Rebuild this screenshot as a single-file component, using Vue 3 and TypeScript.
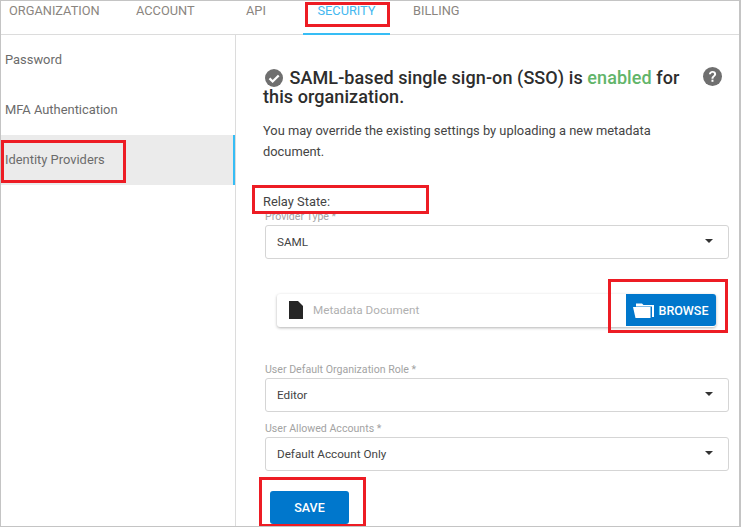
<script setup lang="ts">
const tabs = [
  { label: 'ORGANIZATION', cls: 't1' },
  { label: 'ACCOUNT', cls: 't2' },
  { label: 'API', cls: 't3' },
  { label: 'SECURITY', cls: 't4 active' },
  { label: 'BILLING', cls: 't5' },
]
const nav = ['Password', 'MFA Authentication', 'Identity Providers']
const marks = ['m1', 'm2', 'm3', 'm4', 'm5']
</script>

<template>
  <div class="page">
    <header class="tabs">
      <span v-for="t in tabs" :key="t.label" class="tab" :class="t.cls">{{ t.label }}</span>
    </header>
    <div class="body">
      <aside class="side">
        <div v-for="(n, i) in nav" :key="n" class="nav" :class="{ on: i === 2 }">{{ n }}</div>
      </aside>
      <main class="main">
        <div class="head">
          <h1 class="title">
            <svg class="ico" viewBox="0 0 24 24"><circle cx="12" cy="12" r="12" fill="#6f6f6f"/><path d="M6 12.5l4.2 4.2L18.3 8.6" fill="none" stroke="#fff" stroke-width="3"/></svg>
            SAML-based single sign-on (SSO) is <b>enabled</b> for this organization.
          </h1>
          <svg class="help" viewBox="0 0 24 24"><circle cx="12" cy="12" r="12" fill="#6f6f6f"/><path d="M7.500 9.300c0-2.700 2-4.300 4.600-4.300 2.600 0 4.500 1.600 4.500 3.800 0 3.200-3.400 3.300-3.400 6h-2.500c0-3.800 3.300-3.900 3.300-5.800 0-1-.8-1.700-1.900-1.700-1.200 0-2.100.9-2.100 2z" fill="#fff"/><rect x="10.700" y="16" width="2.500" height="2.700" fill="#fff"/></svg>
        </div>
        <p class="desc">You may override the existing settings by uploading a new metadata document.</p>
        <div class="relay">Relay State:</div>
        <label class="lbl first">Provider Type *</label>
        <div class="select"><span>SAML</span><i class="caret"></i></div>
        <div class="upload">
          <svg class="doc" viewBox="0 0 14 18"><path d="M0 0h9l5 5v13H0z" fill="#262626"/></svg>
          <span class="ph">Metadata Document</span>
          <button class="browse" type="button">
            <svg class="folder" viewBox="0 0 22 16"><path d="M3 3V1.500h6L10.500 3H21v12h-2V4.500H3z" fill="#fff"/><path d="M0 5h17.500v11H2.500z" fill="#fff"/></svg>
            BROWSE
          </button>
        </div>
        <label class="lbl second">User Default Organization Role *</label>
        <div class="select"><span>Editor</span><i class="caret"></i></div>
        <label class="lbl third">User Allowed Accounts *</label>
        <div class="select"><span>Default Account Only</span><i class="caret"></i></div>
        <button class="save" type="button">SAVE</button>
      </main>
    </div>
    <i v-for="m in marks" :key="m" class="mark" :class="m"></i>
  </div>
</template>

<style>
html, body { margin: 0; background: #fff; }
</style>

<style scoped>
.page {
  position: relative;
  width: 741px;
  height: 527px;
  box-sizing: border-box;
  border-top: 1px solid #c4c4c4;
  border-left: 1px solid #c4c4c4;
  border-right: 2px solid #c4c4c4;
  border-bottom: 1px solid #c4c4c4;
  overflow: hidden;
  font-family: Roboto, "Liberation Sans", sans-serif;
  color: #444;
  background: #fff;
}
.tabs {
  display: flex;
  height: 34px;
  box-sizing: border-box;
  border-bottom: 1px solid #dcdcdc;
}
.tab {
  box-sizing: border-box;
  height: 34px;
  padding-top: 3px;
  font-size: 12.800px;
  line-height: 14px;
  color: #8a8580;
  text-align: center;
}
.t1 { width: 118px; padding-left: 8px; text-align: left; }
.t2 { width: 102px; padding-left: 17px; text-align: left; }
.t3 { width: 82px; padding-left: 25px; text-align: left; }
.t4 { width: 87px; }
.t5 { width: 90px; padding-left: 23px; text-align: left; }
.active { color: #45b8f0; border-bottom: 2px solid #36bdf5; }
.body { display: flex; height: 491px; }
.side {
  box-sizing: border-box;
  width: 235px;
  border-right: 1px solid #dcdcdc;
}
.nav {
  box-sizing: border-box;
  height: 50px;
  padding: 17px 0 0 4px;
  font-size: 12.900px;
  line-height: 16px;
  color: #6b6b6b;
}
.on { background: #ebebeb; border-right: 2px solid #36bdf5; }
.main { flex: 1; min-width: 0; padding: 0 0 0 27px; }
.head { display: flex; padding-top: 33px; }
.title {
  width: 425px;
  margin: 0;
  font-size: 18px;
  line-height: 19px;
  font-weight: 500;
  letter-spacing: .08px;
  color: #2d2d2d;
}
.title b { font-weight: 500; color: #62b56a; }
.ico { width: 18px; height: 18px; margin: 0 2px 0 2px; vertical-align: -3px; }
.help { width: 19px; height: 19px; margin: -1px 0 0 15px; }
.desc {
  width: 420px;
  margin: 14px 0 0;
  font-size: 12.870px;
  line-height: 21px;
  color: #444;
}
.relay { margin-top: 32px; font-size: 12.870px; line-height: 16px; color: #444; }
.lbl { display: block; margin: 0 0 -2px 2px; font-size: 10.600px; line-height: 16px; color: #a3a3a3; }
.first { margin-top: -1px; }
.second { margin-top: 35px; }
.third { margin-top: 9px; }
.select {
  display: flex;
  align-items: center;
  justify-content: space-between;
  box-sizing: border-box;
  width: 464px;
  height: 34px;
  margin: 2px 0 0 2px;
  padding: 0 15px 0 11px;
  border: 1px solid #d5d5d5;
  border-radius: 3px;
  font-size: 11.700px;
  color: #444;
}
.caret {
  width: 0;
  height: 0;
  margin-bottom: 3px;
  border-left: 4px solid transparent;
  border-right: 4px solid transparent;
  border-top: 4px solid #333;
}
.upload {
  display: flex;
  align-items: center;
  box-sizing: border-box;
  width: 439px;
  height: 33px;
  margin: 35px 0 0 14px;
  padding: 0 0 2px 12px;
  border-radius: 3px;
  background: #fff;
  box-shadow: 0 1px 3px rgba(0, 0, 0, .3);
}
.doc { width: 14px; height: 18px; }
.ph { flex: 1; margin-left: 10px; font-size: 11.700px; color: #b0b0b0; }
.browse {
  display: flex;
  align-items: center;
  justify-content: center;
  align-self: flex-start;
  gap: 3px;
  width: 90px;
  height: 32px;
  padding: 0;
  border: 0;
  border-radius: 0 3px 3px 0;
  background: #0077cc;
  color: #fff;
  font: 500 12.500px Roboto, sans-serif;
}
.folder { width: 22px; height: 16px; }
.save {
  display: block;
  width: 79px;
  height: 33px;
  margin: 20px 0 0 7px;
  padding: 0;
  border: 0;
  border-radius: 3px;
  background: #0077cc;
  color: #fff;
  font: 500 12.500px Roboto, sans-serif;
}
.mark { position: absolute; box-sizing: border-box; border: 3px solid #ed1c24; pointer-events: none; }
.m1 { left: 304px; top: 1px; width: 85px; height: 25px; }
.m2 { left: 0; top: 139px; width: 125px; height: 43px; }
.m3 { left: 251px; top: 184px; width: 177px; height: 29px; }
.m4 { left: 607px; top: 278px; width: 120px; height: 54px; }
.m5 { left: 258px; top: 476px; width: 107px; height: 50px; }
</style>
